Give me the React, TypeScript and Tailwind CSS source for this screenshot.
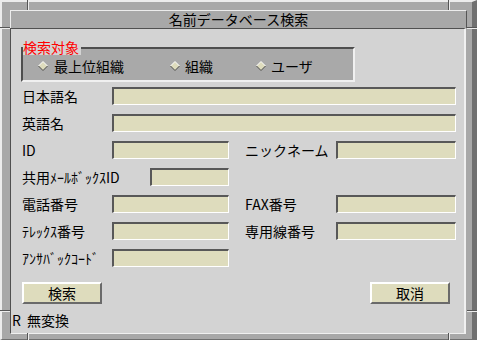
import React from "react";

function Field({ w }: { w: string }) {
  return (
    <div
      className={`${w} h-[18px] shrink-0 bg-[#dedcbd] border-t-2 border-l-2 border-t-[#585858] border-l-[#585858] border-b border-r border-b-white border-r-white`}
    />
  );
}

function Diamond() {
  return (
    <svg width="10" height="10" viewBox="0 0 10 10" className="shrink-0">
      <polygon points="5,0.5 9.5,5 5,9.5 0.5,5" fill="#dedcbd" />
      <polyline points="0.5,5 5,0.5 9.5,5" stroke="#ffffff" fill="none" />
      <polyline points="0.5,5 5,9.5 9.5,5" stroke="#4a4a4a" fill="none" />
    </svg>
  );
}

function Btn({ label }: { label: string }) {
  return (
    <button className="w-[80px] h-[22px] bg-[#dedcbd] border-t-2 border-l-2 border-t-white border-l-white border-b-2 border-r-2 border-b-[#6a6a6a] border-r-[#6a6a6a] text-[14px] leading-[18px] text-black">
      {label}
    </button>
  );
}

function Row({ label, w, label2 }: { label: string; w?: boolean; label2?: string }) {
  return (
    <div className="flex items-center h-[18px]">
      <span className={w ? "w-[128px] shrink-0" : "w-[90px] shrink-0"}>{label}</span>
      <Field w={w ? "w-[79px]" : "w-[117px]"} />
      {label2 && (
        <>
          <span className="w-[91px] ml-[16px] shrink-0">{label2}</span>
          <Field w="w-[120px]" />
        </>
      )}
    </div>
  );
}

export default function App() {
  return (
    <div className="w-[477px] h-[340px] relative flex flex-col bg-[#a8a8a8] border-t-2 border-l-2 border-t-[#ececec] border-l-[#ececec] border-r-[5px] border-r-[#707070] border-b border-b-[#707070] pt-[8px] pl-[8px] pr-[5px] pb-[5px] font-['Noto_Sans_CJK_JP','DejaVu_Sans',sans-serif] text-[14px] leading-[18px] text-black">
      {/* resize handle ticks */}
      <div className="absolute left-[25px] -top-[2px] w-[2px] h-[10px] border-l border-r border-l-[#555] border-r-[#ececec]" />
      <div className="absolute left-[446px] -top-[2px] w-[2px] h-[10px] border-l border-r border-l-[#555] border-r-[#ececec]" />
      <div className="absolute left-[25px] -bottom-[1px] w-[2px] h-[7px] border-l border-r border-l-[#555] border-r-[#ececec]" />
      <div className="absolute left-[446px] -bottom-[1px] w-[2px] h-[7px] border-l border-r border-l-[#555] border-r-[#ececec]" />
      <div className="absolute -left-[2px] top-[25px] w-[10px] h-[2px] border-t border-b border-t-[#555] border-b-[#ececec]" />
      <div className="absolute -left-[2px] top-[308px] w-[10px] h-[2px] border-t border-b border-t-[#555] border-b-[#ececec]" />
      <div className="absolute left-[465px] top-[25px] w-[10px] h-[2px] border-t border-b border-t-[#555] border-b-[#ececec]" />
      <div className="absolute left-[465px] top-[308px] w-[10px] h-[2px] border-t border-b border-t-[#555] border-b-[#ececec]" />

      {/* title bar */}
      <div className="h-[18px] shrink-0 flex items-center justify-center border-t border-l border-t-[#ececec] border-l-[#ececec] border-r border-r-[#555] text-[14px] leading-[17px]">
        名前データベース検索
      </div>

      {/* client area */}
      <div className="flex-1 flex flex-col mr-[1px] bg-[#d3d3d3] border-t border-l border-t-[#505050] border-l-[#505050] border-r-2 border-r-[#f0f0f0] border-b border-b-[#f0f0f0]">
        <div className="flex flex-col px-[11px]">
          <div className="relative mt-[18px] -ml-[1px] w-[334px] h-[35px] bg-[#a9a9a9] border-t-2 border-l-2 border-t-[#4e4e4e] border-l-[#4e4e4e] border-b-2 border-r-2 border-b-[#f0f0f0] border-r-[#f0f0f0] flex items-center pl-[15px] pt-[2px]">
            <span className="absolute left-0 -top-[10px] bg-[#d3d3d3] pr-[2px] leading-[16px] text-[#ff0000]">
              検索対象
            </span>
            <div className="w-[132px] flex items-center gap-[6px]">
              <Diamond />
              <span>最上位組織</span>
            </div>
            <div className="w-[86px] flex items-center gap-[5px]">
              <Diamond />
              <span>組織</span>
            </div>
            <div className="flex items-center gap-[5px]">
              <Diamond />
              <span>ユーザ</span>
            </div>
          </div>

          <div className="mt-[5px] flex flex-col gap-[9px]">
            <div className="flex items-center h-[18px]">
              <span className="w-[90px] shrink-0">日本語名</span>
              <Field w="w-[344px]" />
            </div>
            <div className="flex items-center h-[18px]">
              <span className="w-[90px] shrink-0">英語名</span>
              <Field w="w-[344px]" />
            </div>
            <Row label="ID" label2="ニックネーム" />
            <Row label="共用ﾒｰﾙﾎﾞｯｸｽID" w />
            <Row label="電話番号" label2="FAX番号" />
            <Row label="ﾃﾚｯｸｽ番号" label2="専用線番号" />
            <Row label="ｱﾝｻﾊﾞｯｸｺｰﾄﾞ" />
          </div>

          <div className="mt-[15px] flex justify-between mr-[3px]">
            <Btn label="検索" />
            <Btn label="取消" />
          </div>
        </div>

        <div className="mt-[8px] h-[16px] flex items-center px-[1px] leading-[16px]">
          <span>R</span>
          <span className="ml-[6px]">無変換</span>
        </div>
      </div>
    </div>
  );
}
